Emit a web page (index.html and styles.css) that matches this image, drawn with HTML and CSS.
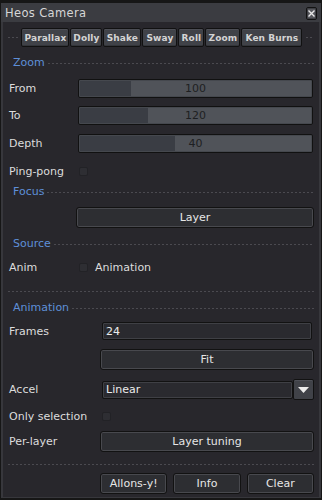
FILE: index.html
```html
<!DOCTYPE html>
<html>
<head>
<meta charset="utf-8">
<link rel="stylesheet" href="styles.css">
</head>
<body>
<div class="window">
  <div class="titlebar">
    <span class="title">Heos Camera</span>
    <span class="close"><svg width="7" height="7" viewBox="0 0 7 7"><path d="M0.5 0.5L6.5 6.5M6.5 0.5L0.5 6.5" stroke="#e8e8e8" stroke-width="1.4"/></svg></span>
  </div>
  <div class="content">
    <div class="tabrow">
      <span class="dots tabdots-l"></span>
      <div class="tabs">
        <span class="tab w48">Parallax</span>
        <span class="tab w32">Dolly</span>
        <span class="tab w38">Shake</span>
        <span class="tab w35">Sway</span>
        <span class="tab w26">Roll</span>
        <span class="tab w35">Zoom</span>
        <span class="tab w61">Ken Burns</span>
      </div>
      <span class="dots tabdots-r"></span>
    </div>

    <div class="header h-zoom"><span class="htext">Zoom</span><span class="dots"></span></div>

    <div class="row r-from"><span class="label l69">From</span><div class="slider"><div class="fill" style="width:51px"></div><span class="sval">100</span></div></div>
    <div class="row r-to"><span class="label l69">To</span><div class="slider"><div class="fill" style="width:68px"></div><span class="sval">120</span></div></div>
    <div class="row r-depth"><span class="label l69">Depth</span><div class="slider"><div class="fill" style="width:95px"></div><span class="sval">40</span></div></div>
    <div class="row r-ping"><span class="label l70">Ping-pong</span><span class="check"></span></div>

    <div class="header h-focus"><span class="htext">Focus</span><span class="dots"></span></div>
    <div class="row r-layer"><span class="label l67"></span><div class="btn grow">Layer</div></div>

    <div class="header h-source"><span class="htext">Source</span><span class="dots"></span></div>
    <div class="row r-anim"><span class="label l70">Anim</span><span class="check"></span><span class="ctext">Animation</span></div>

    <div class="sep s1"></div>

    <div class="header h-animation"><span class="htext">Animation</span><span class="dots"></span></div>
    <div class="row r-frames"><span class="label l93">Frames</span><div class="entry grow">24</div></div>
    <div class="row r-fit"><span class="label l91"></span><div class="btn grow">Fit</div></div>
    <div class="row r-accel"><span class="label l93">Accel</span><div class="entry grow combo">Linear</div><div class="arrow"><svg width="11" height="6" viewBox="0 0 11 6"><path d="M0 0H11L5.5 6Z" fill="#ececec"/></svg></div></div>
    <div class="row r-only"><span class="label l95">Only selection</span><span class="check"></span></div>
    <div class="row r-per"><span class="label l91">Per-layer</span><div class="btn grow">Layer tuning</div></div>

    <div class="sep s2"></div>

    <div class="row r-bottom"><span class="label l91"></span>
      <div class="btns">
        <div class="btn">Allons-y!</div>
        <div class="btn">Info</div>
        <div class="btn">Clear</div>
      </div>
    </div>
  </div>
</div>
</body>
</html>
```
FILE: styles.css
```css
html, body {
  margin: 0;
  padding: 0;
  background: #141414;
}
body {
  width: 322px;
  height: 500px;
  overflow: hidden;
  font-family: "DejaVu Sans", "Liberation Sans", sans-serif;
  font-size: 11px;
  color: #dcdcdc;
}
.window {
  width: 322px;
  height: 500px;
  box-sizing: border-box;
  border: 1px solid #161616;
  border-top-width: 3px;
  border-bottom-width: 2px;
  background: #28272c;
  box-shadow: inset 2px 0 0 #37373c, inset -2px 0 0 #37373c, inset 0 -1px 0 #37373c;
  display: flex;
  flex-direction: column;
}
.titlebar {
  height: 19px;
  background: #3b3c41;
  display: flex;
  align-items: center;
  padding: 0 4px 0 4px;
  flex: none;
}
.title {
  flex: 1;
  color: #d6d6d6;
  letter-spacing: 0.35px;
  font-size: 11.5px;
  line-height: 19px;
  padding-top: 1px;
}
.close {
  width: 9px;
  height: 11px;
  border: 1px solid #121212;
  border-radius: 2px;
  background: #56575c;
  display: flex;
  align-items: center;
  justify-content: center;
  box-shadow: inset 0 0 0 1px #3d3e43;
  margin-top: 2px;
}
.content {
  padding: 0 7px 0 7px;
  display: flex;
  flex-direction: column;
}
.dots {
  height: 1px;
  background: repeating-linear-gradient(to right, #4b4a50 0 2px, transparent 2px 4px);
}
.tabrow {
  margin-top: 6px;
  height: 19px;
  display: flex;
  align-items: center;
}
.tabdots-l { width: 11px; margin-right: 3px; }
.tabdots-r { width: 8px; margin-left: 4px; }
.tabs {
  display: flex;
  gap: 1px;
}
.tab {
  box-sizing: border-box;
  height: 19px;
  border: 1px solid #111;
  border-radius: 2px;
  background: #404248;
  box-shadow: inset 0 1px 0 #4c4e55, inset 0 -1px 0 #33353a;
  font-weight: bold;
  font-size: 9px;
  color: #d4d4d4;
  display: flex;
  align-items: center;
  justify-content: center;
  letter-spacing: 0.1px;
}
.w48 { width: 48px; }
.w32 { width: 32px; }
.w38 { width: 38px; }
.w35 { width: 35px; }
.w26 { width: 26px; }
.w61 { width: 61px; }

.header {
  height: 12px;
  display: flex;
  align-items: center;
}
.htext {
  color: #5e8fd8;
  padding-left: 5px;
  margin-right: 3px;
  line-height: 12px;
}
.header .dots { flex: 1; margin-top: 1px; }
.h-zoom { margin-top: 10px; }
.h-focus { margin-top: 9px; }
.h-source { margin-top: 10px; }
.h-animation { margin-top: 10px; }

.row {
  display: flex;
  align-items: center;
}
.label {
  flex: none;
  padding-left: 1px;
  color: #dcdcdc;
}
.l67 { width: 67px; }
.l69 { width: 69px; }
.l70 { width: 70px; }
.l91 { width: 91px; }
.l93 { width: 93px; }
.l95 { width: 95px; }
.grow { flex: 1; }

.slider {
  flex: 1;
  height: 19px;
  box-sizing: border-box;
  border: 1px solid #111;
  border-radius: 2px;
  background: #505359;
  position: relative;
  display: flex;
  align-items: center;
  justify-content: center;
  margin-right: 1px;
  box-shadow: inset 0 0 0 1px #45484e;
}
.fill {
  position: absolute;
  left: 1px;
  top: 1px;
  bottom: 1px;
  background: #3a3d44;
}
.sval {
  position: relative;
  color: #1e1f22;
  font-size: 11px;
}
.r-from { margin-top: 10px; }
.r-to { margin-top: 8px; }
.r-depth { margin-top: 9px; }
.r-ping { margin-top: 12px; height: 12px; }
.check {
  width: 9px;
  height: 9px;
  box-sizing: border-box;
  border: 1px solid #222226;
  border-radius: 2px;
  background: #2e2e33;
  flex: none;
}
.ctext { margin-left: 7px; color: #dcdcdc; }

.btn {
  height: 21px;
  box-sizing: border-box;
  border: 1px solid #121212;
  border-radius: 3px;
  background: #2d2e32;
  box-shadow: inset 0 0 0 1px #48494e;
  display: flex;
  align-items: center;
  justify-content: center;
  color: #e6e6e6;
}
.r-layer { margin-top: 9px; }
.r-anim { margin-top: 11px; height: 12px; }
.sep { height: 1px; background: repeating-linear-gradient(to right, #4b4a50 0 2px, transparent 2px 4px); }
.s1 { margin-top: 18px; }
.s2 { margin-top: 12px; }

.entry {
  height: 18px;
  box-sizing: border-box;
  border: 1px solid #121212;
  border-radius: 2px;
  background: #2a2a2f;
  box-shadow: inset 0 0 0 1px #3f4045;
  display: flex;
  align-items: center;
  padding-left: 3px;
  color: #ececec;
  margin-right: 2px;
}
.r-frames { margin-top: 8px; }
.r-fit { margin-top: 9px; }
.r-accel { margin-top: 9px; height: 21px; }
.combo { margin-right: 0; }
.arrow {
  width: 21px;
  height: 21px;
  box-sizing: border-box;
  border: 1px solid #121212;
  border-radius: 2px;
  background: #404248;
  box-shadow: inset 0 1px 0 #4e5057;
  display: flex;
  align-items: center;
  justify-content: center;
  flex: none;
}
.r-only { margin-top: 10px; height: 12px; }
.r-only .check { margin-left: -2px; }
.r-per { margin-top: 9px; }
.r-bottom { margin-top: 8px; }
.btns {
  flex: 1;
  display: grid;
  grid-template-columns: 1fr 1fr 1fr;
  gap: 6px;
}
```
